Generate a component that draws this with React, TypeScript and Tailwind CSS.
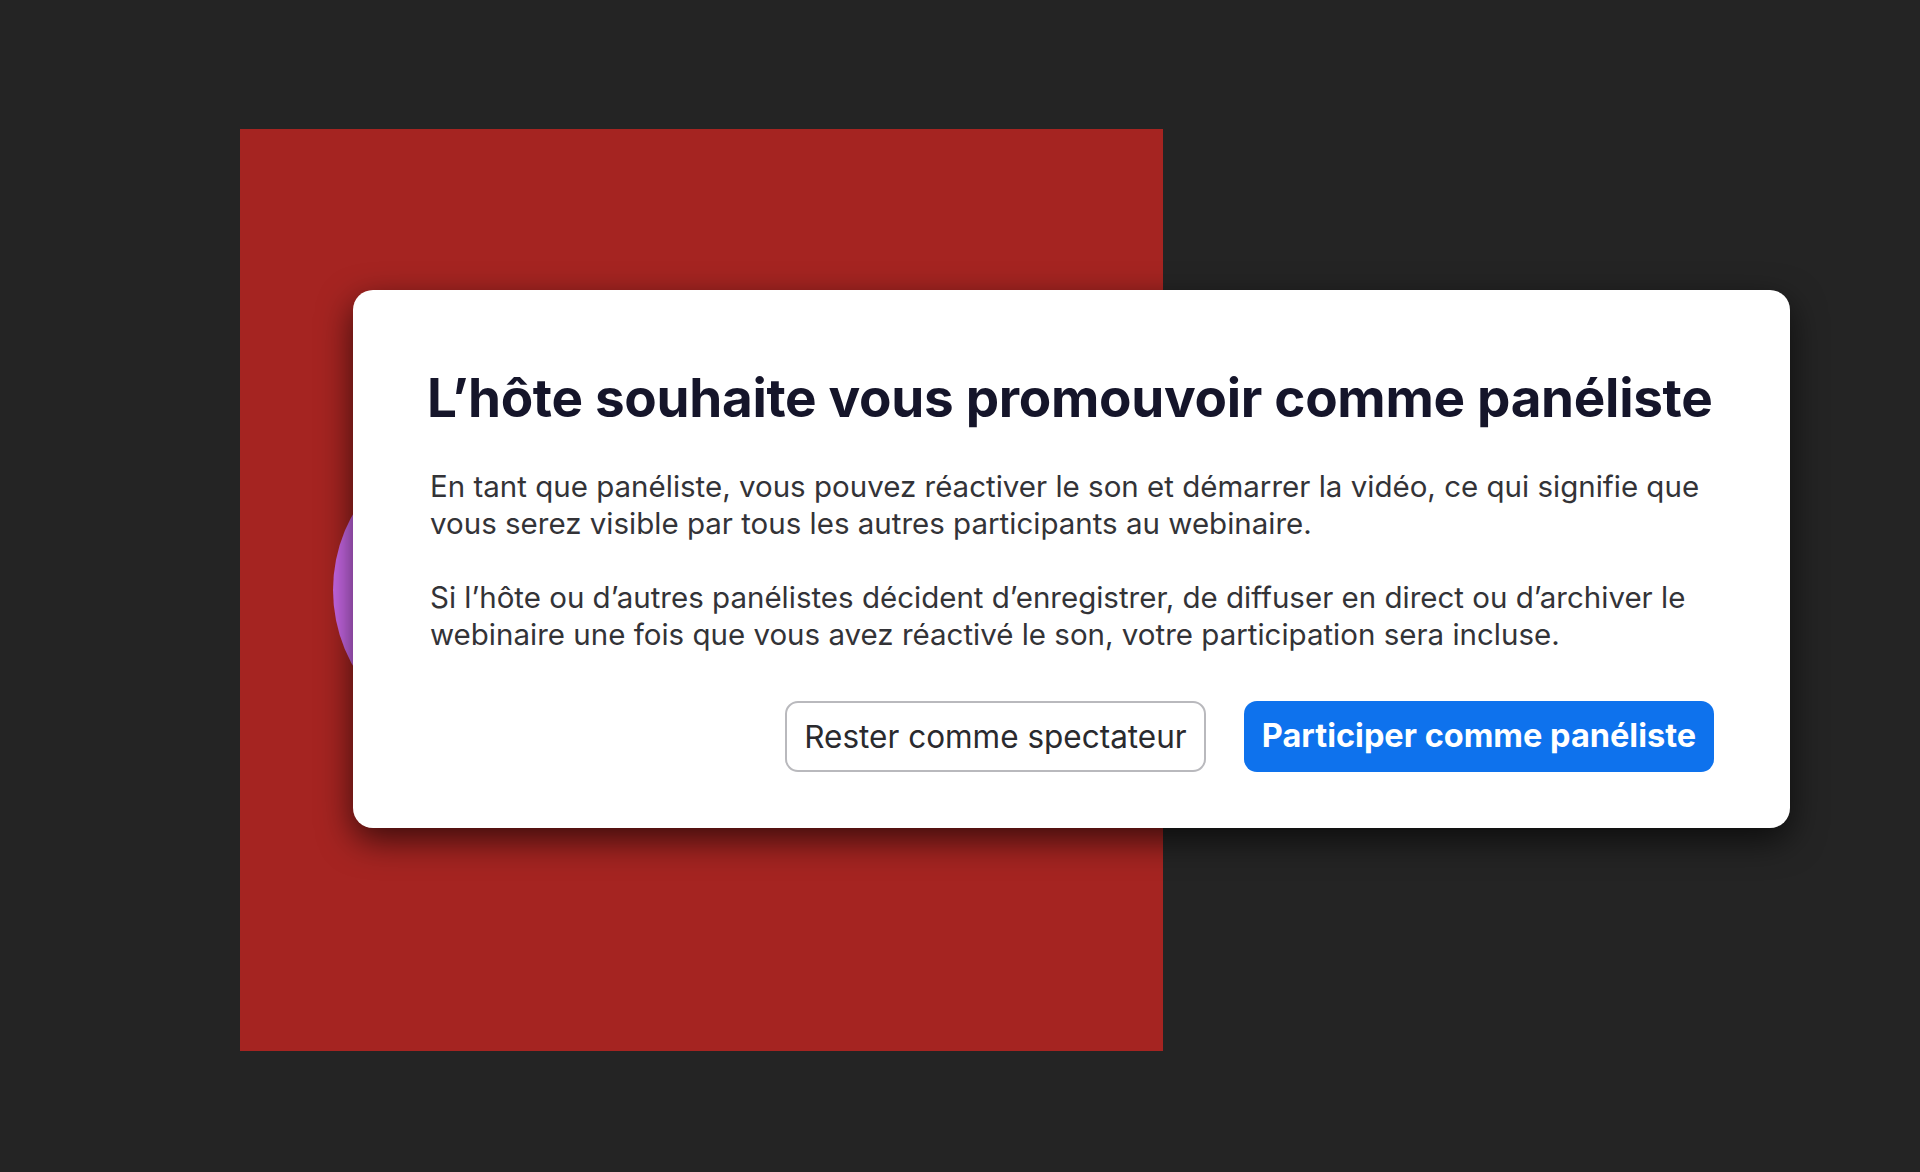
export default function App() {
  return (
    <div
      className="relative w-[1920px] h-[1172px] overflow-hidden bg-[#242424]"
      style={{ fontFamily: "Inter, 'Noto Sans', sans-serif" }}
    >
      <div className="pl-[240px] pt-[129px]">
        <div className="relative w-[923px] h-[922px] bg-[#a52421] overflow-hidden">
          <div className="absolute left-[93px] top-[307px] w-[308px] h-[308px] rounded-full bg-[#c867e6]" />
        </div>
      </div>

      <div className="absolute left-[353px] top-[290px] w-[1437px] h-[538px] rounded-[20px] bg-white shadow-[0_12px_34px_rgba(0,0,0,0.65)] pl-[74px] pr-[60px] pt-[76px]">
        <h1 className="text-[53px] leading-[64px] font-bold text-[#15152a] tracking-[-0.3px] whitespace-nowrap">
          L’hôte souhaite vous promouvoir comme panéliste
        </h1>
        <div className="mt-[38px] pl-[3px] text-[29.5px] leading-[37px] text-[#333337] flex flex-col gap-[37px] whitespace-nowrap">
          <p>
            En tant que panéliste, vous pouvez réactiver le son et démarrer la vidéo, ce qui signifie que
            <br />
            vous serez visible par tous les autres participants au webinaire.
          </p>
          <p>
            Si l’hôte ou d’autres panélistes décident d’enregistrer, de diffuser en direct ou d’archiver le
            <br />
            webinaire une fois que vous avez réactivé le son, votre participation sera incluse.
          </p>
        </div>
        <div className="mt-[48px] pr-[16px] flex justify-end gap-[38px]">
          <button className="h-[71px] w-[421px] rounded-[13px] border-2 border-[#b9b9bd] bg-white text-[31.5px] text-[#2a2a2e] whitespace-nowrap">
            Rester comme spectateur
          </button>
          <button className="h-[71px] w-[470px] rounded-[13px] bg-[#0e72ed] text-[32.5px] font-bold text-white whitespace-nowrap">
            Participer comme panéliste
          </button>
        </div>
      </div>
    </div>
  );
}
